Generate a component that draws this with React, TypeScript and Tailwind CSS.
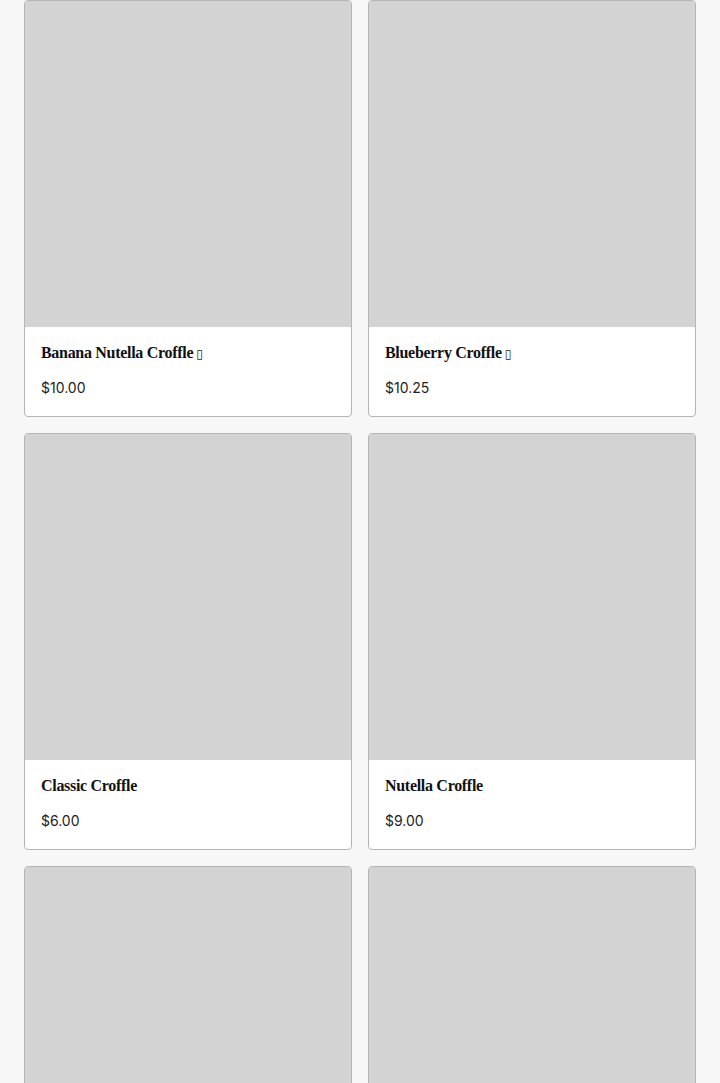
import React from "react";

const items = [
  { name: "Banana Nutella Croffle", tofu: true, price: "$10.00" },
  { name: "Blueberry Croffle", tofu: true, price: "$10.25" },
  { name: "Classic Croffle", tofu: false, price: "$6.00" },
  { name: "Nutella Croffle", tofu: false, price: "$9.00" },
  { name: "", tofu: false, price: "" },
  { name: "", tofu: false, price: "" },
];

export default function App() {
  return (
    <div className="h-[1083px] w-[720px] overflow-hidden bg-[#f7f7f7] px-6">
      <div className="grid grid-cols-2 gap-4">
        {items.map((it, i) => (
          <div
            key={i}
            className="flex flex-col overflow-hidden rounded-[4px] border border-[#b5b5b5] bg-white"
          >
            <div className="aspect-square w-full bg-[#d3d3d3]" />
            <div className="flex flex-col px-4 pt-4 pb-[18px]">
              <div
                className="h-5 text-[16px] leading-5 font-bold text-[#111]"
                style={{ fontFamily: '"Liberation Serif", "DejaVu Serif", serif', letterSpacing: "-0.3px" }}
              >
                {it.name}
                {it.tofu ? (
                  <span
                    className="ml-[3px] text-[12px] font-normal text-[#222]"
                    style={{ fontFamily: '"DejaVu Sans", sans-serif' }}
                  >
                    ▯
                  </span>
                ) : null}
              </div>
              <div
                className="mt-[15px] h-5 text-[14px] leading-5 text-[#222]"
                style={{ fontFamily: 'Inter, "Liberation Sans", sans-serif' }}
              >
                {it.price}
              </div>
            </div>
          </div>
        ))}
      </div>
    </div>
  );
}
